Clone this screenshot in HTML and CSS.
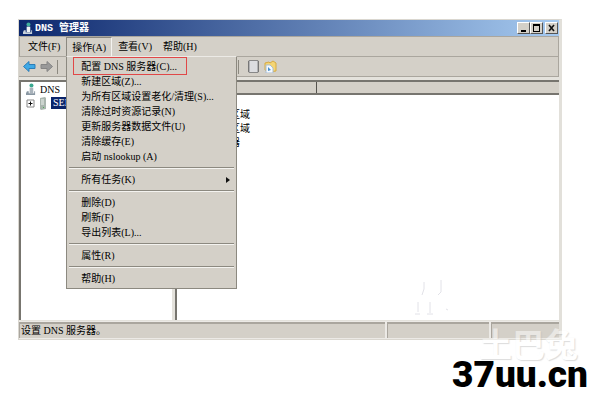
FILE: index.html
```html
<!DOCTYPE html>
<html lang="zh-CN">
  <head>
    <meta charset="UTF-8" />
    <meta name="viewport" content="width=device-width, initial-scale=1.0" />
    <title>DNS 管理器</title>
    <link rel="stylesheet" href="styles.css">
  </head>
  <body>
    <div class="window">
      <header class="titlebar">
        <svg class="app-icon" viewBox="0 0 11 14">
          <circle cx="6" cy="2.5" r="2.2" fill="#3fae9c" />
          <path d="M4 5h4v6H4z" fill="#eef2f5" />
          <path d="M1 9h2v2h6V9h1v4H0v-2z" fill="#c9d2da" />
        </svg>
        <h1>DNS 管理器</h1>
        <div class="controls">
          <button aria-label="最小化"><svg viewBox="0 0 11 10"><path d="M3 7h5v2H3z" /></svg></button>
          <button aria-label="最大化"><svg viewBox="0 0 11 10"><path d="M2 1h7v8H2zM3 3v5h5V3z" fill-rule="evenodd" /></svg></button>
          <button class="close" aria-label="关闭"><svg viewBox="0 0 11 10"><path d="M3 2l5 6M8 2l-5 6" stroke="#111" stroke-width="1.6" /></svg></button>
        </div>
      </header>

      <nav class="menubar">
        <button>文件(F)</button>
        <div class="menu-item">
          <button class="open">操作(A)</button>
          <div class="menu">
            <button class="marked">配置 DNS 服务器(C)...</button>
            <button>新建区域(Z)...</button>
            <button>为所有区域设置老化/清理(S)...</button>
            <button>清除过时资源记录(N)</button>
            <button>更新服务器数据文件(U)</button>
            <button>清除缓存(E)</button>
            <button>启动 nslookup (A)</button>
            <hr />
            <button class="sub">所有任务(K)</button>
            <hr />
            <button>删除(D)</button>
            <button>刷新(F)</button>
            <button>导出列表(L)...</button>
            <hr />
            <button>属性(R)</button>
            <hr />
            <button>帮助(H)</button>
          </div>
        </div>
        <button>查看(V)</button>
        <button>帮助(H)</button>
      </nav>

      <div class="toolbar">
        <button aria-label="后退"><svg viewBox="0 0 13 12"><path d="M.5 6L6 1v3h6v4H6v3z" fill="#3fa9e6" stroke="#2b7db8" /></svg></button>
        <button aria-label="前进"><svg viewBox="0 0 13 12"><path d="M12.5 6L7 1v3H1v4h6v3z" fill="#999" stroke="#858585" /></svg></button>
        <span class="split"></span>
        <div class="tools">
          <span class="split"></span>
          <button aria-label="属性"><svg viewBox="0 0 13 13"><path d="M2 .5h9v12H2z" fill="#dcdde0" stroke="#888" /><path d="M1.5 1v11M11.5 1v11" stroke="#777" /></svg></button>
          <button aria-label="新建区域"><svg viewBox="0 0 13 13"><path d="M1 3l4-1 1 1 3-2 3 2v8l-7 1-4-2z" fill="#f4d575" stroke="#d6aa42" /><path d="M2 5h4l3 3v5H2z" fill="#f5faff" stroke="#a9bdd2" /><path d="M4 7v4l3-1z" fill="#488fd0" /></svg></button>
        </div>
      </div>

      <main class="panes">
        <div class="tree">
          <div class="node">
            <svg class="dns" viewBox="0 0 11 14"><circle cx="6" cy="2.5" r="2.2" fill="#3aa88f" /><path d="M4 5h4v6H4z" fill="#a9b3bb" /><path d="M1 9h2v2h6V9h1v4H0v-2z" fill="#8997a2" /></svg>
            <span>DNS</span>
          </div>
          <div class="node">
            <svg class="plus" viewBox="0 0 9 9"><path d="M1 1h7v7H1z" fill="#fff" stroke="#888" /><path d="M2.5 4.5h4M4.5 2.5v4" stroke="#111" /></svg>
            <svg class="server" viewBox="0 0 8 13"><path d="M1 1l5-1 1 1v11l-5 1-1-1z" fill="#a9b5ae" /><path d="M2 3h3M2 5h3M2 7h3" stroke="#eef3ef" /><path d="M4 10h1v1H4z" fill="#4fae58" /></svg>
            <span class="selected">SERVER</span>
          </div>
        </div>
        <div class="list">
          <div class="columns"><span></span><span></span></div>
          <ul>
            <li>正向查找区域</li>
            <li>反向查找区域</li>
            <li>条件转发器</li>
          </ul>
        </div>
      </main>

      <footer class="status">
        <span>设置 DNS 服务器。</span>
        <span></span>
        <span></span>
      </footer>
    </div>

    <svg class="scratch" viewBox="0 0 40 40"><path d="M10 4v7l-2 6M27 2v12l-3 3M4 24v10M1 36h5M16 24v11M13 36h6M32 31l2 1" fill="none" stroke="#e2e2e8" /></svg>
    <div class="ghost">土巴兔</div>
    <div class="site">37uu.cn</div>
  </body>
</html>
```

FILE: styles.css
```css
* {
  box-sizing: border-box;
}

body {
  margin: 0;
  min-height: 100vh;
  padding: 19px 38px 0 18px;
  position: relative;
  background-color: #fff;
  color: #000;
  font-family: "Liberation Serif", "Noto Sans CJK SC", serif;
  font-size: 10px;
  line-height: 15px;
}

button {
  margin: 0;
  padding: 0;
  border: none;
  background: none;
  color: inherit;
  font: inherit;
  text-align: left;
  white-space: nowrap;
}

svg {
  display: block;
}

.window {
  border: 1px solid #dad7d0;
  border-right: 3px solid #e2e0da;
  background-color: #d4d0c8;
}

.titlebar {
  display: flex;
  align-items: center;
  height: 16px;
  padding: 0 1px 0 4px;
  background: linear-gradient(to right, #0c276d, #a6caf0);
  color: #fff;
}

.titlebar h1 {
  flex: 1;
  margin: 0 0 0 2px;
  font-family: "Liberation Mono", "Noto Sans CJK SC", monospace;
  font-size: 10px;
  font-weight: bold;
}

.app-icon,
.dns {
  width: 10px;
  height: 13px;
}

.controls {
  display: flex;
}

.controls button {
  width: 13px;
  height: 12px;
  background-color: #d4d0c8;
  border: 1px solid #fff;
  border-right-color: #555;
  border-bottom-color: #555;
}

.controls .close {
  margin-left: 2px;
}

.menubar {
  display: flex;
  height: 21px;
  padding-left: 2px;
  border: 1px solid #aaa69e;
}

.menubar > button,
.menu-item > button {
  height: 19px;
  padding: 0 6px;
}

.menubar > button:last-child {
  padding-left: 5px;
}

.menu-item {
  position: relative;
}

.menu-item .open {
  padding: 0 5px;
  border: 1px solid #8c8980;
  border-right-color: #f4f3f0;
  border-bottom: none;
}

.menu {
  position: absolute;
  z-index: 2;
  top: 19px;
  left: 0;
  width: 171px;
  padding: 0 2px 2px;
  background-color: #d4d0c8;
  border: 1px solid #8c8980;
  border-top-color: #eceae6;
}

.menu button {
  display: block;
  width: 100%;
  height: 15px;
  padding-left: 12px;
}

.menu .marked {
  width: 114px;
  height: 18px;
  margin: 0 0 -1px 4px;
  padding-left: 7px;
  border: 1px solid #e04848;
}

.menu .sub {
  display: flex;
  align-items: center;
}

.menu .sub::after {
  content: "";
  margin-left: auto;
  margin-right: 4px;
  border: 3px solid transparent;
  border-left: 4px solid #111;
  border-right: none;
}

.menu hr {
  height: 2px;
  margin: 3px 0;
  border: none;
  border-top: 1px solid #8c8980;
  border-bottom: 1px solid #f4f3f0;
}

.toolbar {
  display: flex;
  align-items: center;
  gap: 4px;
  height: 20px;
  padding-left: 4px;
  border-right: 1px solid #aaa69e;
  border-bottom: 1px solid #aaa69e;
}

.toolbar button svg {
  width: 13px;
  height: 13px;
}

.split {
  width: 1px;
  height: 14px;
  background-color: #8c8980;
}

.tools {
  display: flex;
  align-items: center;
  gap: 4px;
  margin-left: 176px;
}

.tools .split {
  margin-right: 4px;
}

.panes {
  display: grid;
  grid-template-columns: 153px 1fr;
  gap: 3px;
  height: 244px;
  border-top: 3px solid #e4e2dc;
  border-bottom: 1px solid #e4e2dc;
  background-color: #e4e2dc;
}

.tree,
.list {
  min-width: 0;
  background-color: #fff;
  border-top: 2px solid #77756f;
  border-left: 2px solid #77756f;
}

.node {
  display: flex;
  align-items: center;
  height: 14px;
  padding-left: 5px;
  gap: 4px;
}

.plus {
  width: 9px;
  height: 9px;
}

.server {
  width: 8px;
  height: 13px;
}

.selected {
  height: 12px;
  padding: 0 2px;
  line-height: 12px;
  background-color: #0a246a;
  color: #fff;
}

.columns {
  display: grid;
  grid-template-columns: 140px 1fr;
  height: 13px;
  background-color: #d4d0c8;
  border-bottom: 2px solid #77756f;
}

.columns span:first-child {
  border-right: 1px solid #55534e;
}

.list ul {
  margin: 13px 0 0;
  padding: 0 0 0 13px;
  list-style: none;
}

.list li {
  line-height: 14px;
}

.status {
  display: grid;
  grid-template-columns: 1fr 102px 68px;
  gap: 2px;
  height: 18px;
  padding: 1px 0;
  background-color: #eceae6;
}

.status > span {
  height: 16px;
  padding-left: 1px;
  line-height: 13px;
  background-color: #d4d0c8;
  border-top: 2px solid #aaa69e;
  border-left: 1px solid #aaa69e;
}

.scratch {
  position: absolute;
  top: 278px;
  left: 414px;
  width: 40px;
  height: 40px;
}

.ghost {
  position: absolute;
  right: 22px;
  top: 327px;
  color: #fff;
  font-family: "Noto Sans CJK SC", sans-serif;
  font-size: 33px;
  font-weight: bold;
  line-height: 33px;
  opacity: 0.5;
  text-shadow: 1px 1px 1px #bbb;
}

.site {
  position: absolute;
  right: 12px;
  top: 361px;
  color: #000;
  font-family: Roboto, "Liberation Sans", sans-serif;
  font-size: 37px;
  font-weight: 900;
  line-height: 28px;
}
```
